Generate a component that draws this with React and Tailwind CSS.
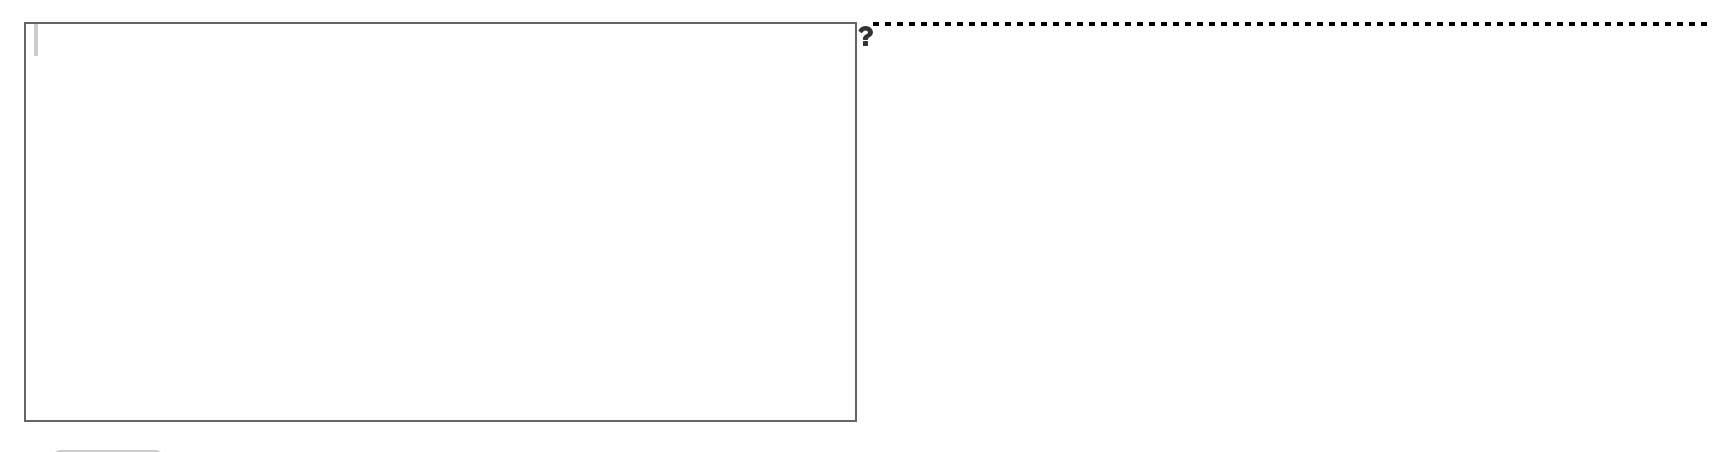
export default function App() {
  return (
    <main className="h-screen overflow-hidden bg-[#fefefe] pt-[22px] pr-3 pl-6 font-['Liberation_Sans',sans-serif]">
      <div className="grid grid-cols-[minmax(0,1fr)_16px_minmax(0,1fr)] items-start">
        <div className="flex h-[400px] border-2 border-[#666566] pl-2">
          <div className="h-8 w-1 shrink-0 bg-[#cccccc]" />
          <textarea
            aria-label="Editor"
            className="min-w-0 flex-1 resize-none bg-transparent px-2 outline-none"
          />
        </div>
        <button type="button" aria-label="Help" className="flex justify-center pt-1 text-[#333333]">
          <svg viewBox="71 256 949 1280" className="h-5 w-[15px]" fill="currentColor" aria-hidden="true">
            <path d="M704 1256v240q0 16-12 28t-28 12h-240q-16 0-28-12t-12-28v-240q0-16 12-28t28-12h240q16 0 28 12t12 28zM1020 656q0 54-15.5 101t-35 76.5-55 59.5-57.5 43.5-61 35.5q-41 23-68.5 65t-27.5 67q0 17-12 32.5t-28 15.5h-240q-15 0-25.5-18.5t-10.5-37.5v-45q0-83 65-156.5t143-108.5q59-27 84-56t25-76q0-42-46.5-74t-107.5-32q-65 0-108 29-35 25-107 115-13 16-31 16-12 0-25-8l-164-125q-13-10-15.5-25t5.5-28q160-266 464-266 80 0 161 31t146 83 106 127.5 41 158.5z" />
          </svg>
        </button>
        <div className="-mr-1 h-1 bg-[repeating-linear-gradient(to_right,#000000_0px,#000000_6px,transparent_6px,transparent_12px)]" />
      </div>
      <button
        type="button"
        aria-label="Run"
        className="mt-7 ml-[30px] block h-10 w-[108px] rounded-md border-2 border-[#cccccc] bg-[#cccccc]"
      />
    </main>
  );
}
